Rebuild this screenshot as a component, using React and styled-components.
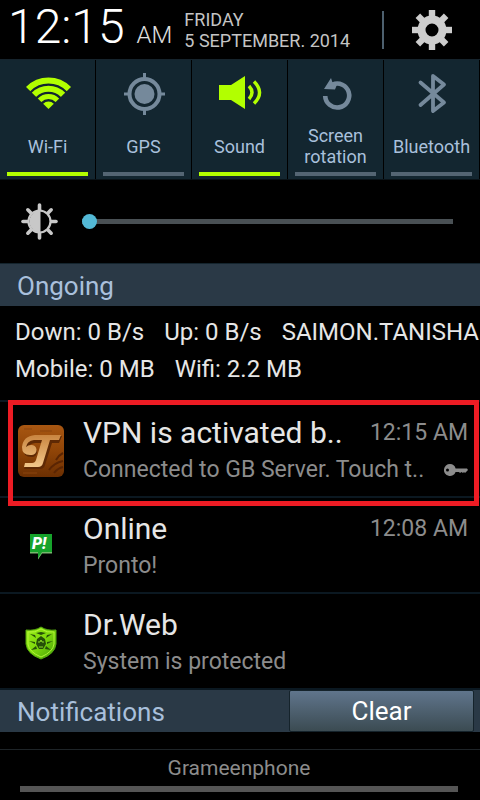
import { useState } from "react";
import styled, { createGlobalStyle } from "styled-components";

const GlobalStyle = createGlobalStyle`
  * {
    box-sizing: border-box;
    margin: 0;
    padding: 0;
  }

  body {
    background-color: #000;
    color: #e6e6e6;
    font-family: Roboto, "Noto Sans", sans-serif;
    overflow-x: hidden;
  }

  button {
    border: none;
    background: none;
    font-family: inherit;
    cursor: pointer;
  }

  svg {
    display: block;
  }
`;

const Shade = styled.main`
  display: flex;
  flex-direction: column;
  min-height: 100vh;
`;

const Header = styled.header`
  display: flex;
  align-items: center;
  height: 59px;
  padding: 0 27px 0 8px;
`;

const Clock = styled.time`
  display: flex;
  align-items: baseline;
  padding-top: 3px;
  font-size: 48px;
  font-weight: 300;
  line-height: 56px;
  color: #fff;
`;

const Meridiem = styled.span`
  margin-left: 12px;
  font-size: 24px;
  color: #e0e0e0;
`;

const CalendarDate = styled.p`
  flex: 1;
  margin-left: 12px;
  font-size: 18px;
  line-height: 21px;
  color: #c4c4c4;
`;

const SettingsButton = styled.button`
  display: flex;
  align-items: center;
  height: 38px;
  padding-left: 27px;
  border-left: 2px solid #4d606e;
`;

const Toggles = styled.div`
  display: grid;
  grid-template-columns: repeat(5, 1fr);
  height: 121px;
  border-top: 1px solid #16242d;
  border-bottom: 1px solid #0a1318;
`;

const Toggle = styled.button`
  display: flex;
  flex-direction: column;
  align-items: center;
  padding: 8px 7px 3px;
  background-color: #132630;
  border-right: 1px solid #000;
  color: ${(props) => (props.$on ? "#b2ff00" : "#75899b")};

  &::after {
    content: "";
    width: 100%;
    height: 4px;
    background-color: ${(props) => (props.$on ? "#b2ff00" : "#546573")};
  }
`;

const ToggleLabel = styled.span`
  display: flex;
  flex: 1;
  align-items: center;
  font-size: 18px;
  line-height: 21px;
  color: #a9c0dc;
`;

const Brightness = styled.label`
  display: flex;
  align-items: center;
  gap: 24px;
  height: 83px;
  padding: 0 27px 0 21px;
`;

const Slider = styled.input`
  flex: 1;
  min-width: 0;
  height: 16px;
  appearance: none;
  background: transparent;

  &::-webkit-slider-runnable-track {
    height: 5px;
    background-color: #495054;
  }

  &::-webkit-slider-thumb {
    appearance: none;
    width: 15px;
    height: 15px;
    margin-top: -5px;
    border-radius: 50%;
    background-color: #53b9d6;
  }
`;

const SectionBar = styled.div`
  display: flex;
  justify-content: space-between;
  height: ${(props) => (props.$lined ? "43px" : "42px")};
  padding: 0 6px 0 17px;
  border-top: ${(props) => (props.$lined ? "1px solid #14242d" : "none")};
  background-color: #2a3946;
`;

const SectionTitle = styled.h2`
  font-size: 26px;
  font-weight: 400;
  line-height: 44px;
  color: #a9c0dc;
`;

const ClearButton = styled.button`
  width: 41%;
  max-width: 185px;
  border: 1px solid #15232b;
  border-radius: 2px;
  background: linear-gradient(#60758c, #3b4b52);
  font-size: 26px;
  line-height: 40px;
  color: #fff;
`;

const Stats = styled.div`
  height: 94px;
  padding: 8px 0 0 15px;
  overflow: hidden;
  font-size: 24px;
  line-height: 37px;
  white-space: nowrap;
`;

const StatsLine = styled.p`
  display: flex;
  gap: 20px;
`;

const List = styled.ul`
  border-bottom: 2px solid #0b1821;
  list-style: none;
`;

const Item = styled.li`
  position: relative;
  display: grid;
  grid-template-columns: 83px 1fr;
  align-items: center;
  height: 96px;
  padding: 3px 12px 0 0;
  border-top: 2px solid #0b1821;
`;

const Highlight = styled.div`
  position: absolute;
  inset: -2px 1px -10px 8px;
  z-index: 1;
  border: 5px solid #ed1c24;
  pointer-events: none;
`;

const ItemIcon = styled.div`
  display: flex;
  justify-content: center;
  padding-right: 2px;
`;

const ItemRow = styled.div`
  display: flex;
  align-items: center;
  justify-content: space-between;
`;

const ItemTitle = styled.h3`
  font-size: 30px;
  font-weight: 400;
  line-height: 38px;
  white-space: nowrap;
`;

const ItemTime = styled.time`
  font-size: 23px;
  line-height: 36px;
  color: #8c8c8c;
  white-space: nowrap;
`;

const ItemText = styled.p`
  font-size: 23px;
  line-height: 36px;
  color: #8c8c8c;
  white-space: nowrap;
`;

const Carrier = styled.footer`
  display: flex;
  flex-direction: column;
  align-items: center;
  margin-top: 17px;
  padding: 0 22px 8px 20px;
  border-top: 1px solid #1e2428;
  font-size: 21px;
  line-height: 36px;
  color: #8c8c8c;
`;

const Handle = styled.div`
  align-self: stretch;
  height: 6px;
  background-color: #555;
`;

function GearIcon() {
  return (
    <svg width="42" height="42" viewBox="-21 -21 42 42" fill="#cdcdcd">
      {[0, 45, 90, 135, 180, 225, 270, 315].map((angle) => (
        <rect
          key={angle}
          x="-3.2"
          y="-20"
          width="6.4"
          height="9"
          transform={`rotate(${angle})`}
        />
      ))}
      <circle r="10.5" fill="none" stroke="#cdcdcd" strokeWidth="8" />
    </svg>
  );
}

function WifiIcon() {
  return (
    <svg width="48" height="52" viewBox="0 0 48 52">
      <clipPath id="wifi-fan">
        <path d="M24.5 41 L-3 14 V0 H52 V14 Z" />
      </clipPath>
      <g
        clipPath="url(#wifi-fan)"
        fill="none"
        stroke="currentColor"
        strokeWidth="6"
      >
        <circle cx="24.5" cy="41" r="28.5" />
        <circle cx="24.5" cy="41" r="20.3" />
        <circle cx="24.5" cy="41" r="12.5" strokeWidth="5" />
        <circle cx="24.5" cy="41" r="7.5" fill="currentColor" stroke="none" />
      </g>
    </svg>
  );
}

function GpsIcon() {
  return (
    <svg width="48" height="52" viewBox="0 0 48 52">
      <g fill="none" stroke="currentColor">
        <circle cx="24.5" cy="26" r="15" strokeWidth="4" />
        <path d="M24.5 5v6M24.5 41v6M4 26h6M39 26h6" strokeWidth="3" />
      </g>
      <circle cx="24.5" cy="26" r="10" fill="currentColor" />
    </svg>
  );
}

function SoundIcon() {
  return (
    <svg width="48" height="52" viewBox="0 0 48 52">
      <path d="M3 17h12l14-9v33l-14-9H3z" fill="currentColor" />
      <g fill="none" stroke="currentColor" strokeWidth="3.4">
        <path d="M33 18q6 6.500 0 13" />
        <path d="M38 13.500q11 11 0 22" />
      </g>
    </svg>
  );
}

function RotationIcon() {
  return (
    <svg width="48" height="52" viewBox="0 0 48 52">
      <path
        d="M13.200 28A12 12 0 1 0 20.500 16.500"
        fill="none"
        stroke="currentColor"
        strokeWidth="4.600"
      />
      <path d="M12 21L19 10l1.500 4.500L26 14l-3 7.500z" fill="currentColor" />
    </svg>
  );
}

function BluetoothIcon() {
  return (
    <svg width="48" height="52" viewBox="0 0 48 52">
      <path
        d="M12.500 14.500L36 34.500 25 43V8l11 8.500L12.500 37"
        fill="none"
        stroke="currentColor"
        strokeWidth="3.800"
        strokeLinecap="round"
        strokeLinejoin="round"
      />
    </svg>
  );
}

function BrightnessIcon() {
  return (
    <svg width="37" height="37" viewBox="-18.500 -18.500 37 37">
      {[0, 45, 90, 135, 180, 225, 270, 315].map((angle) => (
        <path
          key={angle}
          d="M0-11V-16.500"
          stroke="#c8c8c8"
          strokeWidth="3.600"
          strokeLinecap="round"
          transform={`rotate(${angle})`}
        />
      ))}
      <circle r="11" fill="#000" stroke="#c8c8c8" strokeWidth="2.200" />
      <path d="M1-11A11 11 0 0 0 1 11Z" fill="#c8c8c8" />
    </svg>
  );
}

function TunnelIcon() {
  return (
    <svg width="46" height="52" viewBox="0 0 46 52">
      <defs>
        <linearGradient id="leather" x1="0" y1="0" x2="0" y2="1">
          <stop offset="0" stopColor="#a85712" />
          <stop offset="0.5" stopColor="#8f4407" />
          <stop offset="1" stopColor="#6b2f02" />
        </linearGradient>
        <linearGradient id="brass" x1="0" y1="0" x2="0" y2="1">
          <stop offset="0" stopColor="#c98540" />
          <stop offset="1" stopColor="#f3c789" />
        </linearGradient>
      </defs>
      <rect width="46" height="52" rx="6" fill="url(#leather)" />
      <path
        d="M6 4h8M22 6h12M5 48h14"
        stroke="#8a450f"
        strokeWidth="1"
      />
      <path
        d="M31 45q5-7 14-9M36 48q4-5 9-6M38 35q3-5 7-7"
        fill="none"
        stroke="#5a2503"
        strokeWidth="2"
      />
      <path
        d="M43 10L40 17H33L26 39Q25 43 21 43H5L7 38H14Q17 38 18 35L23 17H16Q9 18 9 23A5 5 0 1 1 14 31Q4 32 4 22Q5 11 17 10Z"
        fill="#5f2904"
        transform="translate(1 1)"
      />
      <path
        d="M43 10L41 15H32L25 38Q24 42 20 42H6L7 38H14Q17 38 18 35L24 15H16Q9 16 8 22Q10 20 13 20A5 5 0 0 1 14 30Q4 31 4 22Q5 11 17 10Z"
        fill="url(#brass)"
      />
    </svg>
  );
}

function ProntoIcon() {
  return (
    <svg width="24" height="26" viewBox="0 0 24 26">
      <path d="M1 0h22v19H13l-4 6V19H1z" fill="#16a32b" />
      <path d="M1 18h8v6l4-6h10v1.500H13l-4 6V19.500H1z" fill="#76b86d" />
      <text
        x="3"
        y="15"
        fill="#fff"
        fontFamily="Roboto, sans-serif"
        fontSize="16"
        fontWeight="900"
        fontStyle="italic"
      >
        P!
      </text>
    </svg>
  );
}

function ShieldIcon() {
  return (
    <svg width="32" height="34" viewBox="0 0 32 34">
      <defs>
        <linearGradient id="shield" x1="0" y1="0" x2="1" y2="1">
          <stop offset="0" stopColor="#9cf01a" />
          <stop offset="0.5" stopColor="#7ed80c" />
          <stop offset="1" stopColor="#3d9a08" />
        </linearGradient>
      </defs>
      <path
        d="M16 1Q22 5 31 4V18Q30 28 16 33Q2 28 1 18V4Q10 5 16 1Z"
        fill="url(#shield)"
        stroke="#54a80d"
      />
      <path
        d="M16 3Q22 7 29 6V18Q28 26 16 31Q4 26 3 18V6Q10 7 16 3Z"
        fill="none"
        stroke="#b2f338"
      />
      <path
        d="M12 13l4-3 4 3 1 5-3 5h-4l-3-5zM11 12L5 8l5 1zM21 12l6-4-5 1zM10 16l-6-1 6 3zM22 16l6-1-6 3zM11 20l-5 4 6-1zM21 20l5 4-6-1zM11 7l5-1 5 1-5 2z"
        fill="#254f08"
      />
      <path d="M13 16h2l1-2 1 2h2M14 21h4" stroke="#8edb2a" fill="none" />
    </svg>
  );
}

function KeyIcon() {
  return (
    <svg width="24" height="14" viewBox="0 0 24 14" fill="#8c8c8c">
      <path d="M6 1a6 6 0 1 0 5.600 8H15l1 1 1.500-1 1.500 1 1-1 1 1 3-3-1-1.500H11.600A6 6 0 0 0 6 1z" />
      <circle cx="3.500" cy="7" r="1.500" fill="#000" />
    </svg>
  );
}

const toggles = [
  { name: "Wi-Fi", icon: <WifiIcon />, on: true },
  { name: "GPS", icon: <GpsIcon />, on: false },
  { name: "Sound", icon: <SoundIcon />, on: true },
  { name: "Screen rotation", icon: <RotationIcon />, on: false },
  { name: "Bluetooth", icon: <BluetoothIcon />, on: false },
];

const ongoing = [
  {
    title: "VPN is activated b..",
    text: "Connected to GB Server. Touch t..",
    time: "12:15 AM",
    icon: <TunnelIcon />,
    badge: <KeyIcon />,
    highlighted: true,
  },
  {
    title: "Online",
    text: "Pronto!",
    time: "12:08 AM",
    icon: <ProntoIcon />,
  },
  {
    title: "Dr.Web",
    text: "System is protected",
    icon: <ShieldIcon />,
  },
];

function Notification({ item }) {
  return (
    <Item>
      <ItemIcon>{item.icon}</ItemIcon>
      <div>
        <ItemRow>
          <ItemTitle>{item.title}</ItemTitle>
          {item.time && <ItemTime>{item.time}</ItemTime>}
        </ItemRow>
        <ItemRow>
          <ItemText>{item.text}</ItemText>
          {item.badge}
        </ItemRow>
      </div>
      {item.highlighted && <Highlight />}
    </Item>
  );
}

function App() {
  const [active, setActive] = useState(
    toggles.filter((toggle) => toggle.on).map((toggle) => toggle.name)
  );
  const [level, setLevel] = useState(0);

  function handleToggle(name) {
    setActive((names) =>
      names.includes(name) ? names.filter((n) => n !== name) : [...names, name]
    );
  }

  return (
    <>
      <GlobalStyle />
      <Shade>
        <Header>
          <Clock>
            12:15 <Meridiem>AM</Meridiem>
          </Clock>
          <CalendarDate>
            FRIDAY
            <br />5 SEPTEMBER. 2014
          </CalendarDate>
          <SettingsButton aria-label="Settings">
            <GearIcon />
          </SettingsButton>
        </Header>
        <Toggles>
          {toggles.map((toggle) => (
            <Toggle
              key={toggle.name}
              $on={active.includes(toggle.name)}
              aria-pressed={active.includes(toggle.name)}
              onClick={() => handleToggle(toggle.name)}
            >
              {toggle.icon}
              <ToggleLabel>{toggle.name}</ToggleLabel>
            </Toggle>
          ))}
        </Toggles>
        <Brightness>
          <BrightnessIcon />
          <Slider
            type="range"
            aria-label="Brightness"
            min="0"
            max="100"
            value={level}
            onChange={(e) => setLevel(Number(e.target.value))}
          />
        </Brightness>
        <SectionBar $lined>
          <SectionTitle>Ongoing</SectionTitle>
        </SectionBar>
        <Stats>
          <StatsLine>
            <span>Down: 0 B/s</span>
            <span>Up: 0 B/s</span>
            <span>SAIMON.TANISHA</span>
          </StatsLine>
          <StatsLine>
            <span>Mobile: 0 MB</span>
            <span>Wifi: 2.2 MB</span>
          </StatsLine>
        </Stats>
        <List>
          {ongoing.map((item) => (
            <Notification key={item.title} item={item} />
          ))}
        </List>
        <SectionBar>
          <SectionTitle>Notifications</SectionTitle>
          <ClearButton>Clear</ClearButton>
        </SectionBar>
        <Carrier>
          Grameenphone
          <Handle />
        </Carrier>
      </Shade>
    </>
  );
}

export default App;
